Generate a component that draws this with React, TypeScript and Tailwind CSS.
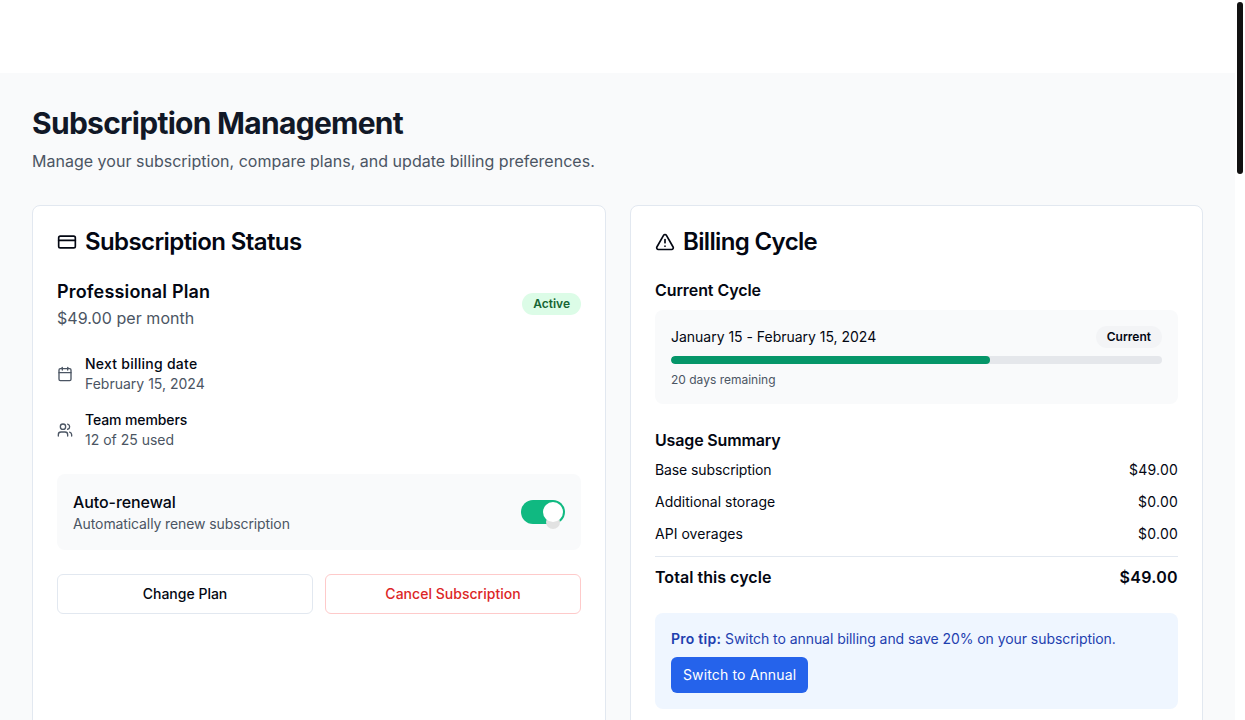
import React from 'react';
import { CreditCard, TriangleAlert, Calendar, Users } from 'lucide-react';

const usage = [
  { label: 'Base subscription', amount: '$49.00', track: 'tracking-[-0.1px]' },
  { label: 'Additional storage', amount: '$0.00', track: 'tracking-normal' },
  { label: 'API overages', amount: '$0.00', track: 'tracking-[0.04px]' },
];

function InfoRow({ icon, title, sub, track }: { icon: React.ReactNode; title: string; sub: string; track: string }) {
  return (
    <div className="flex items-center gap-3">
      <span className="text-[#4b5563]">{icon}</span>
      <div>
        <div className={`text-sm leading-5 font-medium text-[#030712] ${track}`}>{title}</div>
        <div className="text-sm leading-5 text-[#4b5563]">{sub}</div>
      </div>
    </div>
  );
}

export default function App() {
  return (
    <div className="flex h-[720px] overflow-hidden bg-white font-['Inter',sans-serif]">
      <div className="w-[1235px] shrink-0">
        <div className="h-[73px] bg-white" />
        <main className="h-[647px] overflow-hidden bg-[#f9fafb] p-8">
          <h1 className="text-3xl leading-9 font-bold tracking-[-0.72px] text-[#111827]">Subscription Management</h1>
          <p className="mt-2 text-base leading-6 tracking-[0.015px] text-[#4b5563]">
            Manage your subscription, compare plans, and update billing preferences.
          </p>

          <div className="mt-8 grid grid-cols-[574px_573px] gap-6">
            {/* Subscription status */}
            <section className="h-[600px] rounded-lg border border-[#e2e8f0] bg-white px-6 pt-6">
              <h2 className="flex items-center gap-2 text-2xl leading-[24px] font-semibold tracking-tight text-[#030712]">
                <CreditCard size={20} /> Subscription Status
              </h2>

              <div className="mt-6 flex items-center justify-between">
                <div>
                  <div className="text-lg leading-7 font-semibold tracking-[0.18px] text-[#030712]">Professional Plan</div>
                  <div className="text-base leading-6 tracking-[0.06px] text-[#4b5563]">$49.00 per month</div>
                </div>
                <span className="rounded-full bg-[#dcfce7] px-[11px] py-[3px] text-xs leading-4 font-semibold text-[#166534]">
                  Active
                </span>
              </div>

              <div className="mt-6 flex flex-col gap-4">
                <InfoRow icon={<Calendar size={16} />} title="Next billing date" sub="February 15, 2024" track="tracking-[0.25px]" />
                <InfoRow icon={<Users size={16} />} title="Team members" sub="12 of 25 used" track="tracking-[-0.1px]" />
              </div>

              <div className="mt-6 flex h-[76px] items-center justify-between rounded-lg bg-[#f9fafb] px-4">
                <div>
                  <div className="text-base leading-6 font-medium tracking-[-0.08px] text-[#030712]">Auto-renewal</div>
                  <div className="text-sm leading-5 tracking-[-0.1px] text-[#4b5563]">Automatically renew subscription</div>
                </div>
                <div className="relative h-6 w-11 rounded-full bg-[#10b981]">
                  <span className="absolute top-[15px] left-[25px] size-[14px] rounded-full bg-[#e2e2e2]" />
                  <span className="absolute top-[2px] left-[22px] size-5 rounded-full bg-white" />
                </div>
              </div>

              <div className="mt-6 grid grid-cols-2 gap-3">
                <button className="h-10 rounded-md border border-[#e2e8f0] bg-white text-sm font-medium text-[#030712]">
                  Change Plan
                </button>
                <button className="h-10 rounded-md border border-[#fecaca] bg-white text-sm font-medium tracking-[0.02px] text-[#dc2626]">
                  Cancel Subscription
                </button>
              </div>
            </section>

            {/* Billing cycle */}
            <section className="h-[600px] rounded-lg border border-[#e2e8f0] bg-white px-6 pt-6">
              <h2 className="flex items-center gap-2 text-2xl leading-[24px] font-semibold tracking-[-0.65px] text-[#030712]">
                <TriangleAlert size={20} /> Billing Cycle
              </h2>

              <h3 className="mt-6 text-base leading-6 font-semibold tracking-[-0.08px] text-[#030712]">Current Cycle</h3>
              <div className="mt-2 h-[94px] rounded-lg bg-[#f9fafb] px-4 pt-4">
                <div className="flex h-[22px] items-center justify-between">
                  <span className="text-sm tracking-[-0.02px] text-[#030712]">January 15 - February 15, 2024</span>
                  <span className="rounded-full bg-[#f3f4f6] px-[11px] py-[3px] text-xs leading-4 font-semibold text-[#030712]">
                    Current
                  </span>
                </div>
                <div className="mt-[8px] h-2 overflow-hidden rounded-full bg-[#e5e7eb]">
                  <div className="h-full rounded-full bg-[#059669]" style={{ width: '65%' }} />
                </div>
                <div className="mt-2 text-xs leading-4 text-[#4b5563]">20 days remaining</div>
              </div>

              <h3 className="mt-6 text-base leading-6 font-semibold tracking-[-0.15px] text-[#030712]">Usage Summary</h3>
              <div className="mt-2 flex flex-col gap-3">
                {usage.map(row => (
                  <div key={row.label} className="flex justify-between text-sm leading-5 text-[#030712]">
                    <span className={row.track}>{row.label}</span>
                    <span className="tracking-[0.22px]">{row.amount}</span>
                  </div>
                ))}
              </div>
              <div className="mt-3 flex justify-between border-t border-[#e2e8f0] pt-2 text-base leading-6 font-semibold text-[#030712]">
                <span className="tracking-[0.04px]">Total this cycle</span>
                <span className="tracking-[0.32px]">$49.00</span>
              </div>

              <div className="mt-6 rounded-lg bg-[#eff6ff] p-4">
                <p className="text-sm leading-5 tracking-[-0.06px] text-[#1e40af]">
                  <strong className="font-semibold tracking-[0.25px]">Pro tip:</strong> Switch to annual billing and save 20% on your subscription.
                </p>
                <button className="mt-2 h-9 rounded-md bg-[#2563eb] px-3 text-sm font-normal tracking-[0.14px] text-white">
                  Switch to Annual
                </button>
              </div>
            </section>
          </div>
        </main>
      </div>

      {/* scrollbar */}
      <div className="flex-1 pt-[2px] pl-[2px]">
        <div className="h-[172px] w-[6px] rounded-full bg-[#111111]" />
      </div>
    </div>
  );
}
